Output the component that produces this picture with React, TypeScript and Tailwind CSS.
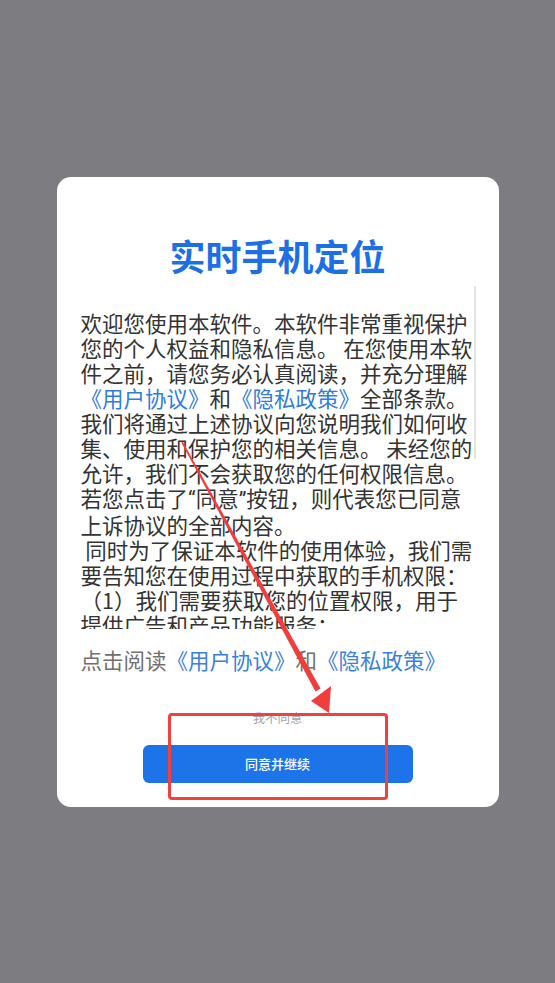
import React from 'react'

const quote = 'font-[Roboto,sans-serif]'

const bodyLines: React.ReactNode[] = [
  '欢迎您使用本软件。本软件非常重视保护',
  '您的个人权益和隐私信息。 在您使用本软',
  '件之前，请您务必认真阅读，并充分理解',
  <>
    <span className="text-[#2f7be0]">《用户协议》</span>和
    <span className="text-[#2f7be0]">《隐私政策》</span>全部条款。
  </>,
  '我们将通过上述协议向您说明我们如何收',
  '集、使用和保护您的相关信息。 未经您的',
  '允许，我们不会获取您的任何权限信息。',
  <>
    若您点击了<span className={quote}>“</span>同意
    <span className={quote}>”</span>按钮，则代表您已同意
  </>,
  '上诉协议的全部内容。',
  ' 同时为了保证本软件的使用体验，我们需',
  '要告知您在使用过程中获取的手机权限：',
  '（1）我们需要获取您的位置权限，用于',
  '提供广告和产品功能服务：',
  '（2）我们需要获取您的存储权限，用于',
  '保存和读取相关数据。',
]

function Annotations() {
  return (
    <>
      <svg
        className="absolute left-0 top-0 pointer-events-none"
        width="555"
        height="983"
        viewBox="0 0 555 983"
      >
        <polygon
          points="182.7,441.6 320.5,688.6 315.5,691.4 181.3,442.4"
          fill="#f23d3d"
        />
        <polygon points="331,686 311,701 329,713" fill="#f23d3d" />
      </svg>
      <div className="absolute left-[168px] top-[713px] w-[220px] h-[87px] border-[3px] border-[#f04141] rounded-[4px] pointer-events-none" />
    </>
  )
}

export default function App() {
  return (
    <div
      className="relative w-[555px] h-[983px] bg-[#7d7c80] flex items-center justify-center"
      style={{ fontFamily: '"Noto Sans CJK SC", "Noto Sans", sans-serif' }}
    >
      <div className="w-[442px] h-[630px] bg-white rounded-[14px] flex flex-col">
        <h1 className="mt-[57px] text-center text-[36px] leading-[43px] font-bold text-[#1c70e4]">
          实时手机定位
        </h1>

        <div className="mt-[9px] h-[343px] flex pl-[24px] pr-[23px] overflow-hidden">
          <div className="flex-1 pt-[24px] text-[21.5px] leading-[25px] text-[#333333]">
            {bodyLines.map((line, i) => (
              <div key={i} className="whitespace-pre">
                {line}
              </div>
            ))}
          </div>
          <div className="w-[2px]">
            <div className="h-[173px] bg-[#e4e4e4]" />
          </div>
        </div>

        <p className="mt-[18px] pl-[24px] text-[21.5px] leading-[25px] text-[#707070] whitespace-nowrap">
          点击阅读<span className="text-[#3a80dc]">《用户协议》</span>和
          <span className="text-[#3a80dc]">《隐私政策》</span>
        </p>

        <button className="mt-[38px] mx-auto text-[12.5px] leading-[16px] text-[#a3a3a3]">
          我不同意
        </button>

        <button className="mt-[19px] mx-auto w-[270px] h-[38px] rounded-[6px] bg-[#1d74e9] text-white text-[13px] font-medium">
          同意并继续
        </button>
      </div>

      <Annotations />
    </div>
  )
}
